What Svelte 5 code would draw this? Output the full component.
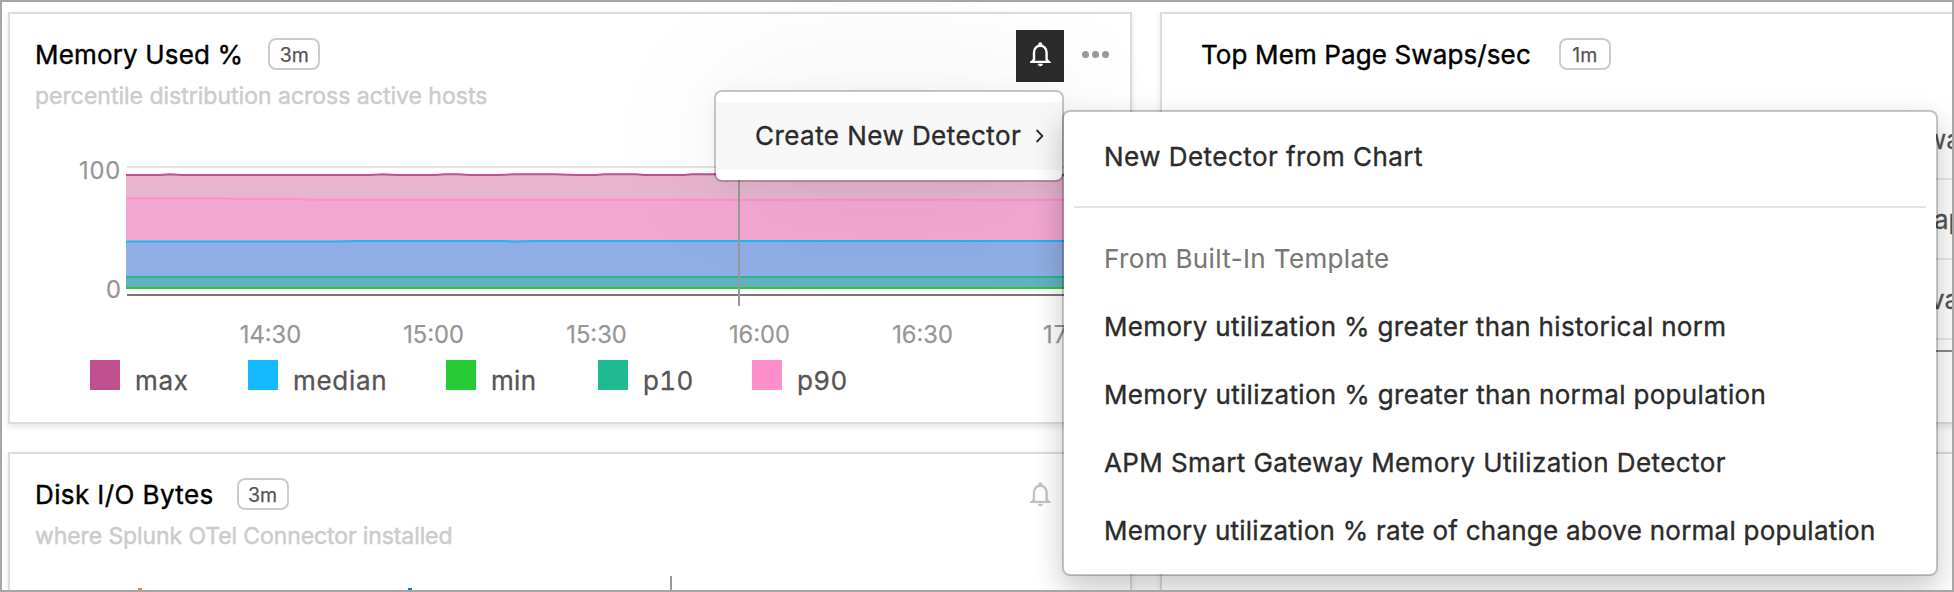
<script>
  const legend = [
    { name: 'max', color: '#c15090', width: 158, track: 0.7 },
    { name: 'median', color: '#14bafb', width: 198, track: 0.7 },
    { name: 'min', color: '#26cb36', width: 152, track: 0.3 },
    { name: 'p10', color: '#1fb992', width: 154, track: 0.4 },
    { name: 'p90', color: '#fe8fcb', width: 110, track: 0.4 }
  ];
  const ticks = ['14:30', '15:00', '15:30', '16:00', '16:30'];
  const templates = [
    { label: 'Memory utilization % greater than historical norm', track: 0.32 },
    { label: 'Memory utilization % greater than normal population', track: 0.33 },
    { label: 'APM Smart Gateway Memory Utilization Detector', track: 0.41 },
    { label: 'Memory utilization % rate of change above normal population', track: 0.25 }
  ];
  const cells = [
    { text: 'wa', left: 763 },
    { text: 'ap', left: 772 },
    { text: 'va', left: 768 }
  ];
</script>

{#snippet bell()}
  <svg class="bell" width="21" height="25" viewBox="0 0 21 25">
    <circle cx="10.3" cy="2.2" r="2" fill="currentColor" />
    <path
      d="M4 17.6V10.6C4 6.2 6.8 3.8 10.3 3.8S16.6 6.2 16.6 10.6V17.6L18.6 19.9H2Z"
      fill="none"
      stroke="currentColor"
      stroke-width="2.4"
    />
    <path d="M0.4 19H20.2V21H0.4Z" fill="currentColor" />
    <path d="M7.7 21.8H12.9C12.9 23.3 11.8 24.2 10.3 24.2S7.7 23.3 7.7 21.8Z" fill="currentColor" />
  </svg>
{/snippet}

<div class="frame">
  <main class="board">
    <section class="card">
      <header>
        <div class="heading" style:gap="25px">
          <h2 style:letter-spacing="0.16px">Memory Used %</h2>
          <span class="badge">3m</span>
        </div>
        <div class="actions">
          <button class="alert active" aria-label="Alerts">{@render bell()}</button>
          <span class="more"><i></i><i></i><i></i></span>
        </div>
      </header>
      <p class="sub">percentile distribution across active hosts</p>
      <svg class="plot" width="1120" height="250" viewBox="10 110 1120 250">
        <rect x="127" y="166" width="980" height="2" fill="#e2e2e2" />
        <rect x="126" y="175" width="981" height="24" fill="#e6b6cf" />
        <rect x="126" y="199" width="981" height="42" fill="#f2a7d1" />
        <rect x="126" y="241" width="981" height="36" fill="#90aee3" />
        <rect x="126" y="277" width="981" height="11" fill="#62b1c0" />
        <g fill="none" stroke-width="2">
          <path
            stroke="#c15090"
            d="M126 175H160L170 174.2L182 175H370L383 174.2L396 175H435L445 174.2H458L470 175H500L515 174.2H555L575 175H596L604 174.2H635L645 175H684L692 174.2H720L1107 175"
          />
          <path stroke="#fe8fcb" d="M126 198.3H215L240 199H290L320 199.8H1107" />
          <path stroke="#14bafb" d="M126 241.6H335L358 241H500L515 241.5L535 241H1107" />
          <path stroke="#1fb992" d="M126 276.9H1107" />
          <path stroke="#26cb36" d="M126 288H1107" />
          <path stroke="#777" d="M127 295H1107" />
          <path stroke="#999" d="M739 166V306" />
        </g>
        <g class="axis">
          <text x="121" y="178.5" text-anchor="end" letter-spacing="0.8">100</text>
          <text x="121" y="298.3" text-anchor="end">0</text>
          {#each ticks as tick, i}
            <text x={270.5 + i * 163} y="342.5" text-anchor="middle">{tick}</text>
          {/each}
          <text x="1043" y="342.5" letter-spacing="1">17:00</text>
        </g>
      </svg>
      <ul class="legend">
        {#each legend as item}
          <li style:width="{item.width}px" style:letter-spacing="{item.track}px">
            <i style:background={item.color}></i>{item.name}
          </li>
        {/each}
      </ul>
    </section>

    <section class="card inset">
      <header>
        <div class="heading" style:gap="28px">
          <h2 style:letter-spacing="0.12px">Top Mem Page Swaps/sec</h2>
          <span class="badge">1m</span>
        </div>
      </header>
      <div class="cells">
        {#each cells as cell}
          <div class="cell" style:padding-left="{cell.left}px">{cell.text}</div>
        {/each}
      </div>
      <div class="baseline"></div>
    </section>

    <section class="card">
      <header>
        <div class="heading" style:gap="23px">
          <h2 style:letter-spacing="0.4px">Disk I/O Bytes</h2>
          <span class="badge">3m</span>
        </div>
        <div class="actions">
          <button class="alert" aria-label="Alerts">{@render bell()}</button>
          <span class="more"><i></i><i></i><i></i></span>
        </div>
      </header>
      <p class="sub tight">where Splunk OTel Connector installed</p>
      <svg class="plot" width="1120" height="60" viewBox="10 550 1120 60">
        <rect x="138" y="588" width="4" height="22" fill="#f08228" />
        <rect x="408" y="588" width="4" height="22" fill="#0a7ec2" />
        <rect x="670" y="576" width="2" height="34" fill="#999" />
      </svg>
    </section>

    <section class="card"></section>
  </main>

  <div class="menu primary">
    <div class="item hover">
      <span>Create New Detector</span>
      <svg width="10" height="16" viewBox="0 0 10 16">
        <path d="M1.6 2L7.4 8L1.6 14" fill="none" stroke="#2b2b2b" stroke-width="1.8" />
      </svg>
    </div>
  </div>

  <div class="menu secondary">
    <div class="item" style:letter-spacing="0.46px">New Detector from Chart</div>
    <hr />
    <div class="item group">From Built-In Template</div>
    {#each templates as t}
      <div class="item" style:letter-spacing="{t.track}px">{t.label}</div>
    {/each}
  </div>
</div>

<style>
  :global(body) {
    margin: 0;
    background: #fff;
  }
  .frame {
    position: relative;
    box-sizing: border-box;
    width: 1954px;
    height: 592px;
    border: 2px solid #a6a6a6;
    overflow: hidden;
    background: #fff;
    font-family: Inter, 'Liberation Sans', sans-serif;
    font-size: 26px;
  }
  .board {
    display: grid;
    grid-template-columns: 1124px 1124px;
    grid-template-rows: 412px 412px;
    gap: 28px;
    padding: 10px 0 0 6px;
  }
  .card {
    box-sizing: border-box;
    border: 2px solid #dcdcdc;
    background: #fff;
    box-shadow: 0 3px 6px rgba(0, 0, 0, 0.1);
    overflow: hidden;
  }
  header {
    display: flex;
    justify-content: space-between;
    align-items: flex-start;
    height: 52px;
    padding: 16px 21px 0 25px;
  }
  .inset header {
    padding-left: 39px;
  }
  .heading {
    display: flex;
    align-items: center;
    height: 32px;
    margin-top: 8px;
  }
  h2 {
    margin: 0;
    font-size: 26px;
    font-weight: 400;
    line-height: 34px;
    height: 32px;
    color: #000;
    -webkit-text-stroke: 0.4px;
  }
  .badge {
    box-sizing: border-box;
    width: 52px;
    height: 32px;
    border: 2px solid #ccc;
    border-radius: 8px;
    font-size: 19.5px;
    line-height: 31px;
    text-align: center;
    color: #555;
    -webkit-text-stroke: 0.25px;
  }
  .actions {
    display: flex;
    align-items: center;
    gap: 18px;
  }
  .alert {
    width: 48px;
    height: 52px;
    padding: 12px 0 0 14px;
    border: 0;
    background: none;
    color: #c4c4c4;
    display: flex;
    align-items: flex-start;
  }
  .alert.active {
    background: #2b2b2b;
    color: #fff;
  }
  .bell {
    display: block;
    flex: none;
  }
  .more {
    display: flex;
    gap: 3px;
    margin-top: -4px;
  }
  .more i {
    width: 7px;
    height: 7px;
    border-radius: 50%;
    background: #999;
  }
  .sub {
    margin: 0;
    padding-left: 25px;
    font-size: 23px;
    line-height: 28px;
    color: #ccc;
    -webkit-text-stroke: 0.5px;
  }
  .sub.tight {
    letter-spacing: -0.1px;
  }
  .plot {
    display: block;
  }
  .axis text {
    font-size: 23.7px;
    fill: #979797;
    stroke: #979797;
    stroke-width: 0.25px;
  }
  .legend {
    display: flex;
    margin: 0;
    padding: 0 0 0 80px;
    list-style: none;
    color: #555;
    line-height: 41px;
    height: 30px;
    font-variant-numeric: tabular-nums;
    -webkit-text-stroke: 0.3px;
  }
  .legend li {
    display: flex;
    gap: 15px;
  }
  .legend i {
    width: 30px;
    height: 30px;
  }
  .cells {
    margin-top: 18px;
    color: #555;
    -webkit-text-stroke: 0.3px;
  }
  .cell {
    box-sizing: border-box;
    height: 80px;
    border-bottom: 2px solid #e8e8e8;
    line-height: 79px;
    white-space: nowrap;
  }
  .baseline {
    margin-top: 10px;
    height: 2px;
    background: #8a8a8a;
  }
  .menu {
    position: absolute;
    box-sizing: border-box;
    border: 2px solid rgba(0, 0, 0, 0.22);
    border-radius: 8px;
    background: #fff;
    background-clip: padding-box;
    padding: 10px 0;
    color: #2b2b2b;
  }
  .primary {
    left: 712px;
    top: 88px;
    width: 350px;
    height: 92px;
    box-shadow: 0 0 150px rgba(0, 0, 0, 0.07), 0 4px 24px rgba(0, 0, 0, 0.05);
  }
  .secondary {
    left: 1060px;
    top: 108px;
    width: 876px;
    height: 466px;
    box-shadow: 0 12px 30px rgba(0, 0, 0, 0.22);
  }
  .item {
    box-sizing: border-box;
    height: 68px;
    padding-left: 40px;
    line-height: 70px;
    white-space: nowrap;
    -webkit-text-stroke: 0.35px;
  }
  .item.hover {
    display: flex;
    align-items: center;
    gap: 14px;
    padding-left: 39px;
    background: #f7f7f7;
    letter-spacing: 0.45px;
  }
  .group {
    color: #777;
    letter-spacing: 0.37px;
    -webkit-text-stroke: 0.1px;
  }
  hr {
    margin: 16px 10px;
    height: 2px;
    border: 0;
    background: #e2e2e2;
  }
</style>
